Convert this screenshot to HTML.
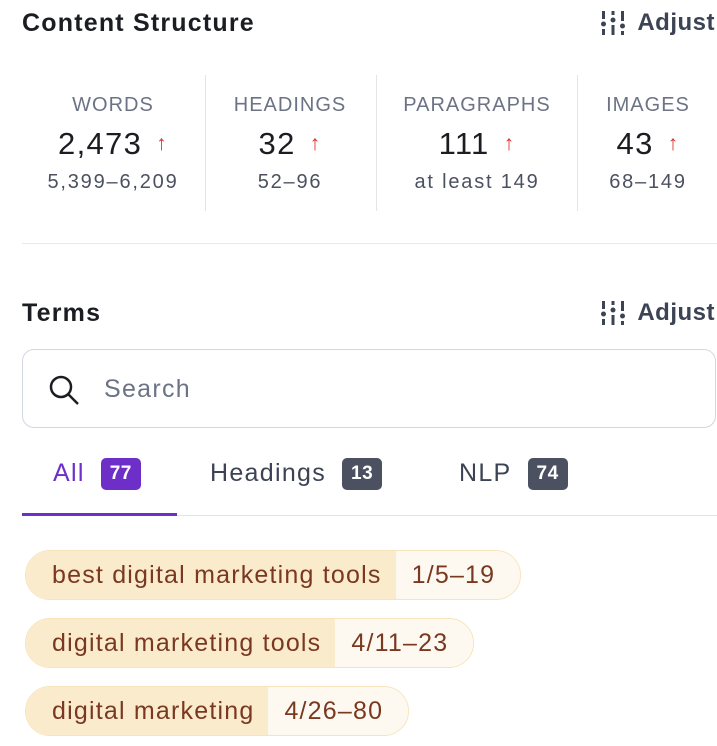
<!DOCTYPE html>
<html><head><style>
body{margin:0;width:717px;height:746px;overflow:hidden;background:#fff;font-family:"Liberation Sans",sans-serif;color:#1f2127;position:relative}
.a{position:absolute}
.h{font-size:25px;font-weight:bold;color:#1b1d22;letter-spacing:1.2px}
.adj{font-size:24px;font-weight:bold;color:#3c4354;display:flex;align-items:center;gap:10px;letter-spacing:.5px}
.col{position:absolute;top:94px;text-align:center}
.lab{font-size:20px;color:#6b7385;letter-spacing:1px}
.val{font-size:31px;color:#1b1d22;margin-top:9px;letter-spacing:1.3px}
.val span{color:#d9362b;font-size:21px;margin-left:14px;vertical-align:4px;font-weight:bold}
.sub{font-size:20px;color:#4b5160;margin-top:9px;letter-spacing:1.8px}
.vl{position:absolute;top:75px;height:136px;width:1px;background:#e2e4e8}
.pill{position:absolute;left:25px;height:48px;border:1px solid #f7e3bc;border-radius:26px;display:flex;overflow:hidden;font-size:25px;color:#7a3820;letter-spacing:1.2px}
.pill .l{background:#fbebcd;padding:0 14px 0 26px;line-height:48px}
.pill .r{background:#fef9f0;padding:0 25px 0 16px;line-height:48px}
.tab{font-size:25px;letter-spacing:1.3px}
.badge{display:inline-block;color:#fff;font-size:19px;font-weight:bold;border-radius:5px;padding:0 9px;line-height:32px;vertical-align:2px;margin-left:16px;letter-spacing:.5px}
</style></head><body>
<div class="a h" style="left:22px;top:9px">Content Structure</div>
<div class="a adj" style="right:2px;top:9px"><svg width="28" height="28" viewBox="0 0 28 28" fill="#3c4354"><rect x="3" y="2" width="3" height="8"/><circle cx="4.5" cy="15" r="2.5"/><rect x="3" y="20" width="3" height="6"/><rect x="12.5" y="2" width="3" height="4"/><circle cx="14" cy="11" r="2.5"/><rect x="12.5" y="16" width="3" height="10"/><rect x="22" y="2" width="3" height="10"/><circle cx="23.5" cy="17" r="2.5"/><rect x="22" y="22" width="3" height="4"/></svg>Adjust</div>
<div class="col" style="left:33px;width:160px"><div class="lab">WORDS</div><div class="val">2,473<span>↑</span></div><div class="sub">5,399–6,209</div></div>
<div class="vl" style="left:205px"></div>
<div class="col" style="left:215px;width:150px"><div class="lab">HEADINGS</div><div class="val">32<span>↑</span></div><div class="sub">52–96</div></div>
<div class="vl" style="left:376px"></div>
<div class="col" style="left:388px;width:178px"><div class="lab">PARAGRAPHS</div><div class="val">111<span>↑</span></div><div class="sub">at least 149</div></div>
<div class="vl" style="left:577px"></div>
<div class="col" style="left:588px;width:120px"><div class="lab">IMAGES</div><div class="val">43<span>↑</span></div><div class="sub">68–149</div></div>
<div class="a" style="left:22px;top:243px;width:695px;height:1px;background:#e8e9ec"></div>
<div class="a h" style="left:22px;top:299px">Terms</div>
<div class="a adj" style="right:2px;top:299px"><svg width="28" height="28" viewBox="0 0 28 28" fill="#3c4354"><rect x="3" y="2" width="3" height="8"/><circle cx="4.5" cy="15" r="2.5"/><rect x="3" y="20" width="3" height="6"/><rect x="12.5" y="2" width="3" height="4"/><circle cx="14" cy="11" r="2.5"/><rect x="12.5" y="16" width="3" height="10"/><rect x="22" y="2" width="3" height="10"/><circle cx="23.5" cy="17" r="2.5"/><rect x="22" y="22" width="3" height="4"/></svg>Adjust</div>
<div class="a" style="left:22px;top:349px;width:692px;height:77px;border:1.5px solid #d3d7de;border-radius:12px"></div>
<svg class="a" style="left:47px;top:373px" width="34" height="34" viewBox="0 0 34 34" fill="none" stroke="#1b1d22" stroke-width="2.5"><circle cx="14" cy="14" r="10"/><path d="M21.5 21.5L31 31"/></svg>
<div class="a" style="left:104px;top:375px;font-size:25px;color:#6b7385;letter-spacing:1.3px">Search</div>
<div class="a tab" style="left:53px;top:458px;color:#6d2fc7">All<span class="badge" style="background:#6d2fc7">77</span></div>
<div class="a tab" style="left:210px;top:458px;color:#3c4354">Headings<span class="badge" style="background:#4b5160">13</span></div>
<div class="a tab" style="left:459px;top:458px;color:#3c4354">NLP<span class="badge" style="background:#4b5160">74</span></div>
<div class="a" style="left:22px;top:515px;width:695px;height:1px;background:#e2e4e8"></div>
<div class="a" style="left:22px;top:513px;width:155px;height:3px;background:#6d2fc7"></div>
<div class="pill" style="top:550px"><div class="l">best digital marketing tools</div><div class="r">1/5–19</div></div>
<div class="pill" style="top:618px"><div class="l">digital marketing tools</div><div class="r">4/11–23</div></div>
<div class="pill" style="top:686px"><div class="l">digital marketing</div><div class="r">4/26–80</div></div>
</body></html>
